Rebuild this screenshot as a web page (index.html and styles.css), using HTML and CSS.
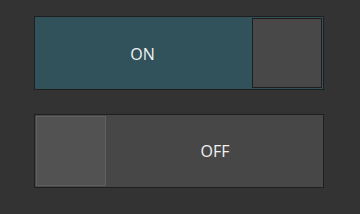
FILE: index.html
```html
<!DOCTYPE html>
<html>
<head>
<meta charset="utf-8">
<link rel="stylesheet" href="styles.css">
</head>
<body>
<div class="panel">
  <div class="toggle on">
    <div class="track"><span class="label">ON</span></div>
    <div class="thumb"></div>
  </div>
  <div class="toggle off">
    <div class="thumb"></div>
    <div class="track"><span class="label">OFF</span></div>
  </div>
</div>
</body>
</html>
```
FILE: styles.css
```css
html, body {
  margin: 0;
  padding: 0;
  width: 360px;
  height: 214px;
  background: #333333;
  overflow: hidden;
}
.panel {
  display: flex;
  flex-direction: column;
  gap: 24px;
  padding: 16px 0 0 34px;
}
.toggle {
  width: 286px;
  height: 70px;
  border: 1px solid #1f1f1f;
  padding: 1px;
  display: flex;
}
.toggle.on {
  background: #31525a;
}
.toggle.off {
  background: #474747;
}
.track {
  flex: 1;
  display: flex;
  align-items: center;
  justify-content: center;
}
.label {
  font-family: "Open Sans", "Noto Sans", sans-serif;
  font-size: 16px;
  color: #f2f2f2;
  line-height: 1;
}
.on .label {
  margin-top: 1px;
  margin-left: -3px;
}
.off .label {
  margin-top: 0;
  margin-left: 2px;
}
.thumb {
  width: 68px;
  height: 68px;
}
.on .thumb {
  background: #484848;
  border: 1px solid #1e1e1e;
}
.off .thumb {
  background: #525252;
  border: 1px solid #606060;
}
```
